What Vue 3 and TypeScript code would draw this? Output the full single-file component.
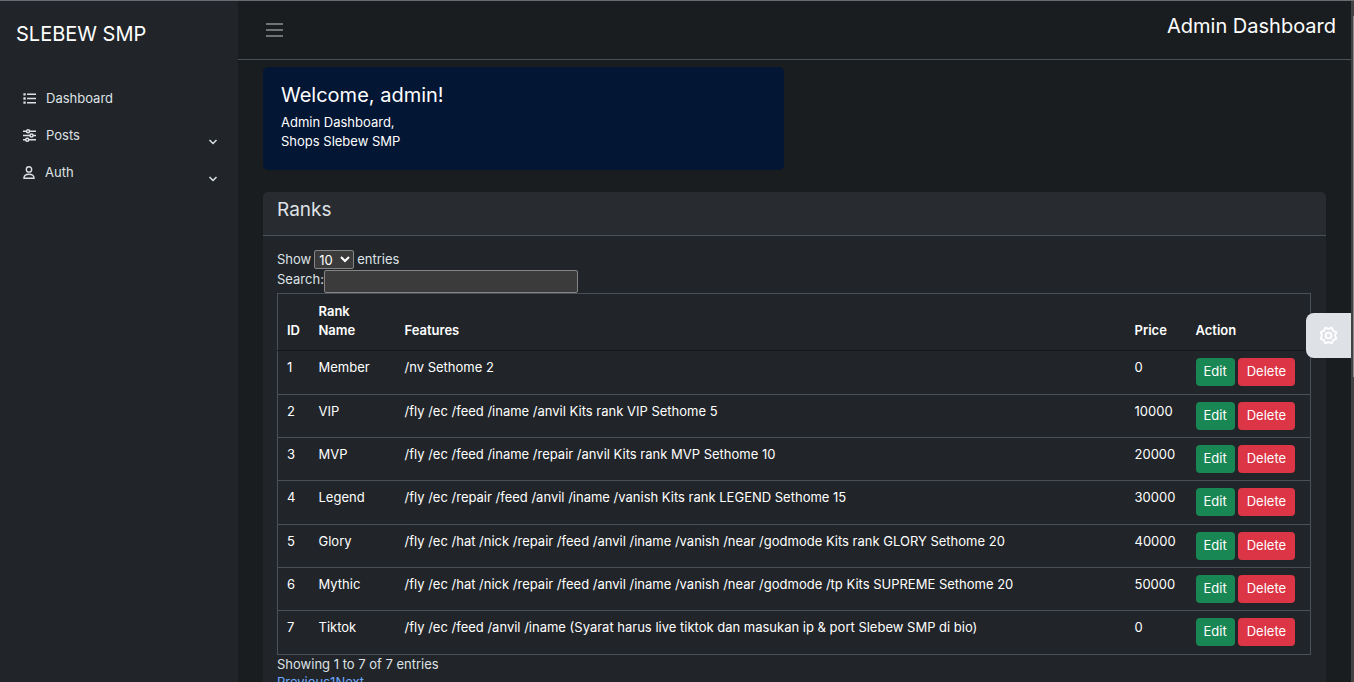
<script setup lang="ts">
import { ref, computed } from 'vue'

interface Rank {
  id: number
  name: string
  features: string
  price: number
}

const ranks: Rank[] = [
  { id: 1, name: 'Member', features: '/nv Sethome 2', price: 0 },
  { id: 2, name: 'VIP', features: '/fly /ec /feed /iname /anvil Kits rank VIP Sethome 5', price: 10000 },
  { id: 3, name: 'MVP', features: '/fly /ec /feed /iname /repair /anvil Kits rank MVP Sethome 10', price: 20000 },
  { id: 4, name: 'Legend', features: '/fly /ec /repair /feed /anvil /iname /vanish Kits rank LEGEND Sethome 15', price: 30000 },
  { id: 5, name: 'Glory', features: '/fly /ec /hat /nick /repair /feed /anvil /iname /vanish /near /godmode Kits rank GLORY Sethome 20', price: 40000 },
  { id: 6, name: 'Mythic', features: '/fly /ec /hat /nick /repair /feed /anvil /iname /vanish /near /godmode /tp Kits SUPREME Sethome 20', price: 50000 },
  { id: 7, name: 'Tiktok', features: '/fly /ec /feed /anvil /iname (Syarat harus live tiktok dan masukan ip & port Slebew SMP di bio)', price: 0 },
]

const search = ref('')
const pageSize = ref(10)

const visible = computed(() => {
  const q = search.value.trim().toLowerCase()
  return ranks
    .filter((r) => `${r.id} ${r.name} ${r.features} ${r.price}`.toLowerCase().includes(q))
    .slice(0, pageSize.value)
})
</script>

<template>
  <div class="app">
    <aside class="sidebar">
      <a class="brand" href="#">SLEBEW SMP</a>
      <nav class="menu">
        <a class="item" href="#">
          <svg class="icon" viewBox="0 0 16 16" fill="currentColor" aria-hidden="true">
            <path d="M5 1.800h11v2H5zM5 7h11v2H5zM5 12.200h11v2H5zM.5 1.400h2.800v2.800H.5zM.5 6.600h2.800v2.800H.5zM.5 11.800h2.800v2.800H.5z" />
          </svg>
          <span>Dashboard</span>
        </a>
        <button class="item" type="button">
          <svg class="icon" viewBox="0 0 16 16" fill="none" stroke="currentColor" stroke-width="1.900" aria-hidden="true">
            <path d="M0 2.800h4.300M8 2.800h8M0 8h8.500M12.500 8H16M0 13.200h3.300M7 13.200h9" />
            <circle cx="6.200" cy="2.800" r="1.900" />
            <circle cx="10.500" cy="8" r="1.900" />
            <circle cx="5.200" cy="13.200" r="1.900" />
          </svg>
          <span>Posts</span>
          <svg class="chevron" viewBox="0 0 10 10" fill="none" stroke="currentColor" stroke-width="1.500" aria-hidden="true"><path d="M1.500 3 5 6.500 8.500 3" /></svg>
        </button>
        <button class="item" type="button">
          <svg class="icon narrow" viewBox="0 0 14 16" fill="none" stroke="currentColor" stroke-width="1.700" aria-hidden="true">
            <circle cx="7" cy="4.200" r="3.300" />
            <path d="M.8 15c0-3 2.200-4.800 6.200-4.800s6.200 1.800 6.200 4.800z" />
          </svg>
          <span>Auth</span>
          <svg class="chevron" viewBox="0 0 10 10" fill="none" stroke="currentColor" stroke-width="1.500" aria-hidden="true"><path d="M1.500 3 5 6.500 8.500 3" /></svg>
        </button>
      </nav>
    </aside>

    <div class="page">
      <header class="topbar">
        <button class="burger" type="button" aria-label="Toggle menu">
          <svg viewBox="0 0 17 14" fill="none" stroke="currentColor" stroke-width="1.500" aria-hidden="true"><path d="M0 1h17M0 7h17M0 13h17" /></svg>
        </button>
        <h1>Admin Dashboard</h1>
      </header>

      <main class="content">
        <section class="welcome">
          <h2>Welcome, admin!</h2>
          <p>Admin Dashboard,<br />Shops Slebew SMP</p>
        </section>

        <section class="card">
          <h2 class="card-head">Ranks</h2>
          <div class="card-body">
            <label class="length">Show
              <select v-model="pageSize">
                <option :value="10">10</option>
                <option :value="25">25</option>
                <option :value="50">50</option>
              </select>
              entries</label>
            <label class="search">Search:<input v-model="search" type="search" /></label>
            <table>
              <thead>
                <tr>
                  <th class="c-id">ID</th>
                  <th class="c-name">Rank Name</th>
                  <th>Features</th>
                  <th class="c-price">Price</th>
                  <th class="c-action">Action</th>
                </tr>
              </thead>
              <tbody>
                <tr v-for="r in visible" :key="r.id">
                  <td>{{ r.id }}</td>
                  <td>{{ r.name }}</td>
                  <td>{{ r.features }}</td>
                  <td>{{ r.price }}</td>
                  <td>
                    <div class="actions">
                      <button class="btn edit" type="button">Edit</button>
                      <button class="btn delete" type="button">Delete</button>
                    </div>
                  </td>
                </tr>
              </tbody>
            </table>
            <p class="info">Showing 1 to {{ visible.length }} of {{ ranks.length }} entries</p>
            <div class="pager"><a href="#">Previous</a><a href="#">1</a><a href="#">Next</a></div>
          </div>
        </section>
      </main>
    </div>

    <button class="settings" type="button" aria-label="Settings">
      <svg viewBox="-10 -10 20 20" fill="none" stroke="currentColor" stroke-width="1.900" stroke-linejoin="round" aria-hidden="true">
        <path d="M0-6.900 3.400-8.300 4.900-4.900 8.300-3.400 6.900 0 8.300 3.400 4.900 4.900 3.400 8.300 0 6.900-3.400 8.300-4.900 4.900-8.300 3.400-6.900 0-8.300-3.400-4.900-4.900-3.400-8.300z" />
        <circle r="3.100" />
      </svg>
    </button>
    <div class="scrollbar" aria-hidden="true"><div class="thumb"></div></div>
  </div>
</template>

<style>
body {
  margin: 0;
  background: #1a1d20;
}
</style>

<style scoped>
.app {
  position: relative;
  display: flex;
  box-sizing: border-box;
  height: 100vh;
  overflow: hidden;
  padding-right: 3px;
  border-top: 1px solid #686c72;
  background: #1a1d20;
  color: #dee2e6;
  font: 13px/19px Inter, "Open Sans", sans-serif;
  color-scheme: dark;
}
h1, h2, p {
  margin: 0;
  font-weight: 400;
}
button {
  margin: 0;
  border: 0;
  background: none;
  color: inherit;
  font: inherit;
  cursor: pointer;
}
a {
  text-decoration: none;
}
.sidebar {
  flex: 0 0 238px;
  box-sizing: border-box;
  padding: 16px;
  background: #212529;
}
.brand {
  display: block;
  color: #fff;
  font-size: 20px;
  line-height: 34px;
}
.menu {
  display: flex;
  flex-direction: column;
  margin-top: 29px;
}
.item {
  display: flex;
  align-items: center;
  gap: 10px;
  height: 37px;
  padding: 0 4px 0 7px;
  color: #dee2e6;
  text-align: left;
}
.icon {
  width: 13px;
  height: 13px;
  overflow: visible;
}
.icon.narrow {
  width: 12px;
}
.chevron {
  width: 10px;
  height: 10px;
  margin-left: auto;
  padding-top: 12px;
}
.page {
  flex: 1;
  min-width: 0;
}
.topbar {
  display: flex;
  justify-content: space-between;
  box-sizing: border-box;
  height: 59px;
  padding: 10px 15px 0 28px;
  border-bottom: 1px solid #495057;
}
.burger {
  align-self: flex-start;
  padding: 12px 0;
  color: #8e8e8e;
}
.burger svg {
  display: block;
  width: 17px;
  height: 14px;
}
.topbar h1 {
  color: #fff;
  font-size: 20px;
  line-height: 30px;
}
.content {
  padding: 7px 25px;
}
.welcome {
  box-sizing: border-box;
  width: 49%;
  height: 103px;
  margin-bottom: 22px;
  padding: 16px 18px;
  border-radius: 5px;
  background: #031633;
  color: #fff;
}
.welcome h2 {
  margin-bottom: 5px;
  font-size: 20px;
  line-height: 25px;
}
.card {
  border-radius: 5px;
  background: #212529;
}
.card-head {
  padding: 5px 14px 13px;
  border-bottom: 1px solid #495057;
  border-radius: 5px 5px 0 0;
  background: #282b2f;
  font-size: 19px;
  line-height: 25px;
}
.card-body {
  padding: 13px 15px 30px 14px;
}
.length, .search {
  display: flex;
}
.length {
  align-items: center;
  gap: 3px;
  height: 21px;
}
.length select {
  box-sizing: border-box;
  width: 40px;
  height: 19px;
  padding: 0;
  border: 1px solid #858585;
  border-radius: 2px;
  background: #3b3b3b;
  color: #fff;
  font: inherit;
}
.search {
  height: 23px;
}
.search input {
  box-sizing: border-box;
  width: 254px;
  height: 23px;
  margin: 0;
  border: 1px solid #858585;
  border-radius: 2px;
  background: #3b3b3b;
  color: #fff;
  font: inherit;
}
table {
  width: 100%;
  border: 1px solid #495057;
  border-collapse: collapse;
  table-layout: fixed;
  color: #fff;
}
th {
  height: 56px;
  box-sizing: border-box;
  padding: 8px 9px 10px;
  border-bottom: 1px solid #16191c;
  font-weight: 600;
  text-align: left;
  vertical-align: bottom;
}
td {
  box-sizing: border-box;
  height: 43px;
  padding: 7px 9px;
  border-bottom: 1px solid #495057;
  vertical-align: top;
}
tr:nth-child(3n + 1) td {
  height: 44px;
}
.c-id { width: 32px; }
.c-name { width: 86px; }
.c-price { width: 61px; }
.c-action { width: 124px; }
.actions {
  display: flex;
  gap: 3px;
}
.btn {
  height: 28px;
  padding: 0 8px 2px;
  border-radius: 4px;
  color: #fff;
}
.edit {
  background: #198754;
}
.delete {
  padding: 0 9px 2px;
  background: #dc3545;
}
.info {
  line-height: 18px;
}
.pager a {
  color: #6ea8fe;
}
.settings {
  position: absolute;
  top: 312px;
  right: 3px;
  width: 45px;
  height: 45px;
  padding: 13px;
  border-radius: 8px 0 0 8px;
  background: #dee2e6;
  color: #fff;
}
.settings svg {
  display: block;
  width: 19px;
  height: 19px;
}
.scrollbar {
  position: absolute;
  top: 0;
  right: 0;
  bottom: 0;
  width: 3px;
  background: #424242;
}
.thumb {
  width: 1px;
  height: 53%;
  margin: 15px 0 0 2px;
  background: #8a8a8a;
}
</style>
